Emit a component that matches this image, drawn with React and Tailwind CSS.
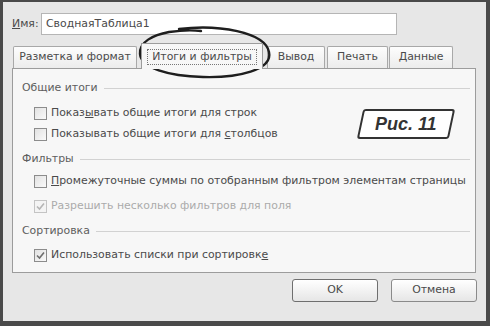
import React from 'react';

const Check = ({ checked, disabled }) => (
  <span
    className={`relative flex h-[13px] w-[13px] shrink-0 items-center justify-center border ${
      disabled ? 'border-[#c4c4c4] bg-[#f4f4f4]' : 'border-[#8c8c8c] bg-gradient-to-br from-[#e2e2e2] to-[#fafafa]'
    }`}
  >
    {checked && (
      <svg width="9" height="9" viewBox="0 0 9 9">
        <path
          d="M1 4.5 L3.5 7 L8 1.5"
          fill="none"
          stroke={disabled ? '#b5b5b5' : '#6f6f6f'}
          strokeWidth="1.6"
        />
      </svg>
    )}
  </span>
);

const Row = ({ children, checked, disabled, className = '' }) => (
  <div className={`flex h-[20px] items-center gap-[4px] whitespace-nowrap pl-[21px] ${className}`}>
    <Check checked={checked} disabled={disabled} />
    <span className={disabled ? 'text-[#ababab]' : 'text-[#4a4a4a]'}>{children}</span>
  </div>
);

const Section = ({ title, className = '' }) => (
  <div className={`flex h-[20px] items-center gap-[6px] whitespace-nowrap pl-[9px] pr-[5px] ${className}`}>
    <span className="text-[#5e5e5e]">{title}</span>
    <div className="h-px flex-1 bg-[#d2d2d2]" />
  </div>
);

const Tab = ({ label, active, className = '' }) =>
  active ? (
    <div className={`relative z-10 -mb-px flex h-[26px] items-center justify-center whitespace-nowrap border border-b-0 border-[#9c9c9c] bg-[#f7f7f7] ${className}`}>
      <span className="border border-dotted border-[#777] px-[4px] leading-[14px] text-[#4a4a4a]">{label}</span>
    </div>
  ) : (
    <div className={`flex h-[22px] items-center justify-center whitespace-nowrap rounded-t-[2px] border border-b-0 border-[#a8a8a8] bg-gradient-to-b from-[#fdfdfd] to-[#ececec] text-[#4a4a4a] ${className}`}>
      {label}
    </div>
  );

export default function App() {
  return (
    <div
      className="relative h-[326px] w-[490px] overflow-hidden border-t-[2px] border-l-[3px] border-r-[4px] border-b-[5px] border-[#4a4a4a] bg-[#e7e7e7] text-[10.9px]"
      style={{ fontFamily: '"DejaVu Sans", sans-serif' }}
    >
      {/* name field */}
      <div className="mt-[11px] flex h-[22px] items-center pl-[9px]">
        <span className="w-[29px] text-[#4a4a4a]">
          <span className="underline">И</span>мя:
        </span>
        <div className="flex h-[22px] w-[356px] items-center border border-[#b5b5b5] bg-white pl-[4px] text-[#4a4a4a]">
          СводнаяТаблица1
        </div>
      </div>

      {/* tabs */}
      <div className="ml-[10px] mt-[9px] flex h-[24px] items-end">
        <Tab label="Разметка и формат" className="w-[124px]" />
        <Tab label="Итоги и фильтры" active className="ml-[4px] w-[122px]" />
        <Tab label="Вывод" className="ml-[4px] w-[58px]" />
        <Tab label="Печать" className="ml-[2px] w-[61px]" />
        <Tab label="Данные" className="ml-px w-[64px]" />
      </div>

      {/* panel */}
      <div className="ml-[9px] flex h-[205px] w-[464px] flex-col border border-[#9c9c9c] bg-[#f7f7f7] pt-[9px]">
        <Section title="Общие итоги" />
        <Row className="mt-[5px]">
          Показ<span className="underline">ы</span>вать общие итоги для строк
        </Row>
        <Row className="mt-px">
          Показывать общие итоги для <span className="underline">с</span>толбцов
        </Row>
        <Section title="Фильтры" className="mt-[5px]" />
        <Row className="mt-[2px]">
          <span className="underline">П</span>ромежуточные суммы по отобранным фильтром элементам страницы
        </Row>
        <Row checked disabled className="mt-[5px]">
          Разрешить несколько фильтров для поля
        </Row>
        <Section title="Сортировка" className="mt-[5px]" />
        <Row checked className="mt-[4px]">
          Использовать списки при сортировк<span className="underline">е</span>
        </Row>
      </div>

      {/* buttons */}
      <div className="mt-[6px] flex justify-end gap-[13px] pr-[9px]">
        <button className="h-[23px] w-[86px] rounded-[3px] border border-[#6f6f6f] bg-gradient-to-b from-[#ffffff] to-[#e6e6e6] text-[#4a4a4a]">
          OK
        </button>
        <button className="h-[23px] w-[86px] rounded-[3px] border border-[#8a8a8a] bg-gradient-to-b from-[#ffffff] to-[#e6e6e6] text-[#4a4a4a]">
          Отмена
        </button>
      </div>

      {/* figure label */}
      <div className="absolute left-[357px] top-[107px] flex h-[30px] w-[92px] -skew-x-12 items-center justify-center rounded-[3px] border-[2.5px] border-[#333] bg-white">
        <span className="skew-x-12 text-[18px] font-bold italic text-[#333]" style={{ fontFamily: '"Liberation Sans", sans-serif' }}>
          Рис. 11
        </span>
      </div>

      {/* hand-drawn ellipse */}
      <svg className="pointer-events-none absolute left-0 top-0" width="490" height="326">
        <path
          d="M176 27 C 215 22, 262 30, 266 50 C 270 68, 235 76, 200 75 C 165 74, 138 66, 137 52 C 136 40, 150 33, 166 30 C 180 28, 190 28, 198 29"
          fill="none"
          stroke="#1e1e1e"
          strokeWidth="2.4"
          strokeLinecap="round"
        />
      </svg>
    </div>
  );
}
